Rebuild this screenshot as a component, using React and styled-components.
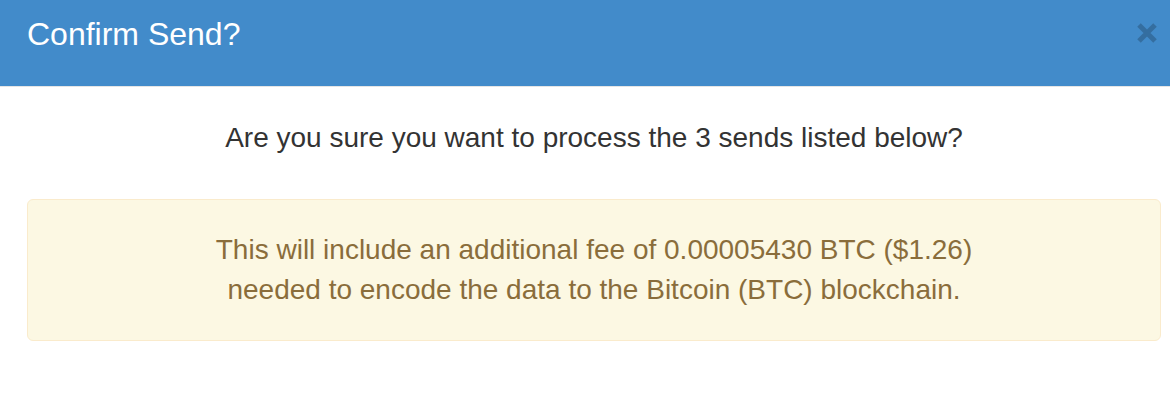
import React from "react";
import styled, { createGlobalStyle } from "styled-components";

const Global = createGlobalStyle`
  html, body { margin: 0; padding: 0; background: #fff; }
  body { font-family: "Liberation Sans", Arial, Helvetica, sans-serif; }
`;

const Modal = styled.div`
  width: 1170px;
  height: 402px;
  background: #fff;
  display: flex;
  flex-direction: column;
`;

const Header = styled.div`
  height: 86px;
  background: #428bca;
  border-bottom: 1px solid #e5e5e5;
  display: flex;
  align-items: flex-start;
  justify-content: space-between;
  padding: 0 10px 0 27px;
  box-sizing: content-box;
`;

const Title = styled.h4`
  margin: 0;
  padding-top: 16px;
  color: #fff;
  font-size: 32px;
  font-weight: 400;
  line-height: 36px;
`;

const Close = styled.button`
  margin-top: 20px;
  border: 0;
  background: none;
  padding: 0;
  width: 26px;
  height: 26px;
  opacity: 0.2;
  display: flex;
  align-items: center;
  justify-content: center;
  cursor: pointer;
`;

const Body = styled.div`
  padding: 30px 9px 0 27px;
  display: flex;
  flex-direction: column;
  align-items: stretch;
`;

const Question = styled.p`
  margin: 0;
  text-align: center;
  color: #333;
  font-size: 28px;
  line-height: 42px;
`;

const Alert = styled.div`
  margin-top: 40px;
  background: #fcf8e3;
  border: 1px solid #faebcc;
  border-radius: 6px;
  color: #8a6d3b;
  text-align: center;
  font-size: 28px;
  line-height: 40px;
  padding: 30px 20px 30px;
  height: 142px;
  box-sizing: border-box;
`;

export default function App() {
  return (
    <>
      <Global />
      <Modal>
        <Header>
          <Title>Confirm Send?</Title>
          <Close aria-label="Close">
            <svg width="24" height="24" viewBox="0 0 24 24">
              <path d="M4 4 L20 20 M20 4 L4 20" stroke="#000" strokeWidth="5" strokeLinecap="butt" />
            </svg>
          </Close>
        </Header>
        <Body>
          <Question>Are you sure you want to process the 3 sends listed below?</Question>
          <Alert>
            This will include an additional fee of 0.00005430 BTC ($1.26)
            <br />
            needed to encode the data to the Bitcoin (BTC) blockchain.
          </Alert>
        </Body>
      </Modal>
    </>
  );
}
